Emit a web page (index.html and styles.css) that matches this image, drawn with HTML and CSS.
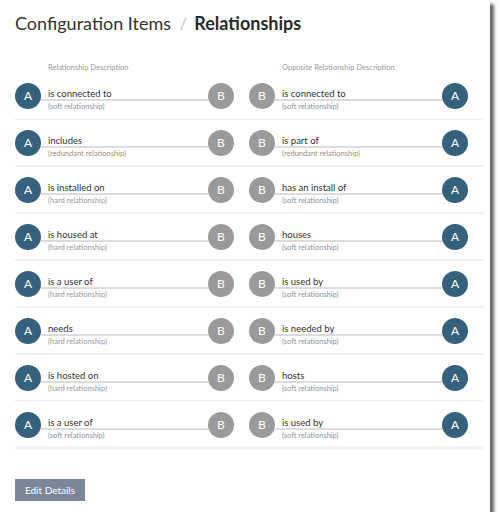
FILE: index.html
```html
<!DOCTYPE html>
<html>
<head>
<meta charset="utf-8">
<link rel="stylesheet" href="styles.css">
</head>
<body>
<div class="frame">
  <h1 class="title"><span class="crumb">Configuration Items</span><span class="sep">/</span><span class="current">Relationships</span></h1>
  <div class="grid head">
    <div class="colhead">Relationship Description</div>
    <div class="colhead">Opposite Relationship Description</div>
  </div>
  <div class="rows">
    <div class="row">
      <div class="pair"><span class="dot a">A</span><div class="mid"><div class="main">is connected to</div><div class="sub soft">(soft relationship)</div></div><span class="dot b">B</span></div>
      <div class="pair"><span class="dot b">B</span><div class="mid"><div class="main">is connected to</div><div class="sub soft">(soft relationship)</div></div><span class="dot a">A</span></div>
    </div>
    <div class="row">
      <div class="pair"><span class="dot a">A</span><div class="mid"><div class="main">includes</div><div class="sub red">(redundant relationship)</div></div><span class="dot b">B</span></div>
      <div class="pair"><span class="dot b">B</span><div class="mid"><div class="main">is part of</div><div class="sub red">(redundant relationship)</div></div><span class="dot a">A</span></div>
    </div>
    <div class="row">
      <div class="pair"><span class="dot a">A</span><div class="mid"><div class="main">is installed on</div><div class="sub hard">(hard relationship)</div></div><span class="dot b">B</span></div>
      <div class="pair"><span class="dot b">B</span><div class="mid"><div class="main">has an install of</div><div class="sub soft">(soft relationship)</div></div><span class="dot a">A</span></div>
    </div>
    <div class="row">
      <div class="pair"><span class="dot a">A</span><div class="mid"><div class="main">is housed at</div><div class="sub hard">(hard relationship)</div></div><span class="dot b">B</span></div>
      <div class="pair"><span class="dot b">B</span><div class="mid"><div class="main">houses</div><div class="sub soft">(soft relationship)</div></div><span class="dot a">A</span></div>
    </div>
    <div class="row">
      <div class="pair"><span class="dot a">A</span><div class="mid"><div class="main">is a user of</div><div class="sub hard">(hard relationship)</div></div><span class="dot b">B</span></div>
      <div class="pair"><span class="dot b">B</span><div class="mid"><div class="main">is used by</div><div class="sub soft">(soft relationship)</div></div><span class="dot a">A</span></div>
    </div>
    <div class="row">
      <div class="pair"><span class="dot a">A</span><div class="mid"><div class="main">needs</div><div class="sub hard">(hard relationship)</div></div><span class="dot b">B</span></div>
      <div class="pair"><span class="dot b">B</span><div class="mid"><div class="main">is needed by</div><div class="sub soft">(soft relationship)</div></div><span class="dot a">A</span></div>
    </div>
    <div class="row">
      <div class="pair"><span class="dot a">A</span><div class="mid"><div class="main">is hosted on</div><div class="sub hard">(hard relationship)</div></div><span class="dot b">B</span></div>
      <div class="pair"><span class="dot b">B</span><div class="mid"><div class="main">hosts</div><div class="sub soft">(soft relationship)</div></div><span class="dot a">A</span></div>
    </div>
    <div class="row">
      <div class="pair"><span class="dot a">A</span><div class="mid"><div class="main">is a user of</div><div class="sub soft">(soft relationship)</div></div><span class="dot b">B</span></div>
      <div class="pair"><span class="dot b">B</span><div class="mid"><div class="main">is used by</div><div class="sub soft">(soft relationship)</div></div><span class="dot a">A</span></div>
    </div>
  </div>
  <div class="actions"><button class="btn">Edit Details</button></div>
</div>
</body>
</html>
```

FILE: styles.css
```css
* { box-sizing: border-box; }
html, body { margin: 0; padding: 0; background: #fff; }
body { font-family: "Lato", "Open Sans", sans-serif; color: #333; }

.frame {
  width: 490px;
  height: 512px;
  background: #fff;
  padding: 10px 7px 0 15px;
  box-shadow: 4px 4px 3px rgba(0, 0, 0, 0.6);
}

.title {
  margin: 0;
  font-size: 18px;
  line-height: 26px;
  font-weight: 400;
  color: #333;
  display: flex;
  align-items: baseline;
}
.title .sep { color: #ccc; margin: 0 7px 0 8px; }
.title .current { font-weight: 700; color: #2a2a2a; }

.grid, .row {
  display: grid;
  grid-template-columns: 219px 219px;
  column-gap: 15px;
}

.head { margin-top: 27px; height: 10px; }
.colhead {
  padding-left: 33px;
  font-size: 7.5px;
  line-height: 10px;
  color: #999;
}

.rows { width: 468px; }
.row {
  height: 47px;
  border-bottom: 2px solid #eef0f2;
  align-items: center;
}

.pair { display: flex; align-items: center; }
.dot {
  width: 26px;
  height: 26px;
  border-radius: 50%;
  flex: 0 0 26px;
  display: flex;
  align-items: center;
  justify-content: center;
  color: #fff;
  font-size: 12px;
}
.dot.a { background: #36617d; }
.dot.b { background: #9a9a9a; }

.mid { flex: 1; display: flex; flex-direction: column; margin-top: 9px; }
.main {
  font-size: 9.5px;
  line-height: 11px;
  color: #333;
  padding-left: 7px;
  border-bottom: 2px solid #dcdcdc;
}
.sub {
  font-size: 7.5px;
  line-height: 10px;
  padding-left: 7px;
  padding-top: 1px;
}
.sub.soft { color: #8795a2; }
.sub.hard { color: #999; }
.sub.red { color: #a38d78; }

.actions { margin-top: 29px; }
.btn {
  width: 70px;
  height: 22px;
  border: none;
  background: #7a8798;
  color: #fff;
  font-family: "Lato", "Open Sans", sans-serif;
  font-size: 10px;
  padding: 0;
}
```
